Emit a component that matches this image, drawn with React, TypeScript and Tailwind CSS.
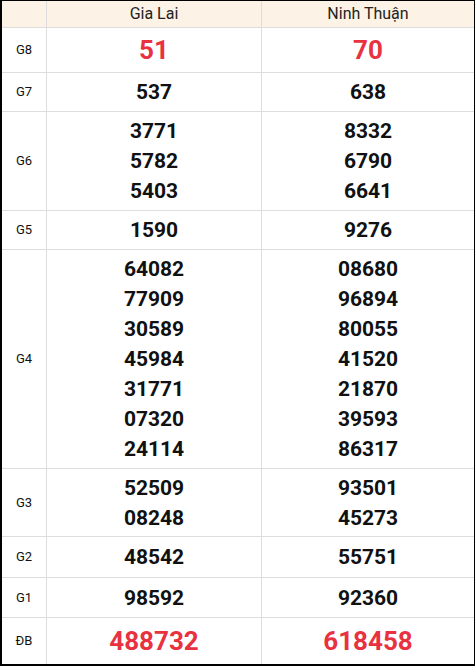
import React from 'react';

type Row = { label: string; a: string[]; b: string[]; h: string; special?: boolean };

const rows: Row[] = [
  { label: 'G8', a: ['51'], b: ['70'], h: 'h-[44px]', special: true },
  { label: 'G7', a: ['537'], b: ['638'], h: 'h-[38px]' },
  { label: 'G6', a: ['3771', '5782', '5403'], b: ['8332', '6790', '6641'], h: 'h-[98px]' },
  { label: 'G5', a: ['1590'], b: ['9276'], h: 'h-[38px]' },
  {
    label: 'G4',
    a: ['64082', '77909', '30589', '45984', '31771', '07320', '24114'],
    b: ['08680', '96894', '80055', '41520', '21870', '39593', '86317'],
    h: 'h-[218px]',
  },
  { label: 'G3', a: ['52509', '08248'], b: ['93501', '45273'], h: 'h-[67px]' },
  { label: 'G2', a: ['48542'], b: ['55751'], h: 'h-[40px]' },
  { label: 'G1', a: ['98592'], b: ['92360'], h: 'h-[39px]' },
  { label: 'ĐB', a: ['488732'], b: ['618458'], h: 'h-[46px]', special: true },
];

const Numbers = ({ items, special }: { items: string[]; special?: boolean }) => (
  <div className="flex flex-col items-center justify-center">
    {items.map((n, i) => (
      <span
        key={i}
        className={
          special
            ? 'text-[26px] leading-[30px] font-bold text-[#e8323f]'
            : 'text-[21px] leading-[30px] font-bold text-[#111]'
        }
      >
        {n}
      </span>
    ))}
  </div>
);

export default function App() {
  return (
    <div
      className="w-[475px] h-[666px] bg-white border-l-2 border-t border-r border-b-2 border-black"
      style={{ fontFamily: 'Roboto, "Liberation Sans", sans-serif' }}
    >
      {/* header */}
      <div className="flex h-[27px] bg-[#fdf2e6] border-b border-[#dddddd]">
        <div className="w-[44px] border-r border-[#dddddd] box-content" />
        <div className="w-[214px] border-r border-[#dddddd] box-content flex items-center justify-center text-[16px] text-[#222]">
          Gia Lai
        </div>
        <div className="flex-1 flex items-center justify-center text-[16px] text-[#222]">Ninh Thuận</div>
      </div>

      {rows.map((r, idx) => (
        <div
          key={r.label}
          className={`flex box-content ${r.h} ${idx < rows.length - 1 ? 'border-b border-[#dddddd]' : ''}`}
        >
          <div className="w-[44px] border-r border-[#dddddd] box-content flex items-center justify-center text-[13px] text-[#111]">
            {r.label}
          </div>
          <div className="w-[214px] border-r border-[#dddddd] box-content flex items-center justify-center">
            <Numbers items={r.a} special={r.special} />
          </div>
          <div className="flex-1 flex items-center justify-center">
            <Numbers items={r.b} special={r.special} />
          </div>
        </div>
      ))}
    </div>
  );
}
